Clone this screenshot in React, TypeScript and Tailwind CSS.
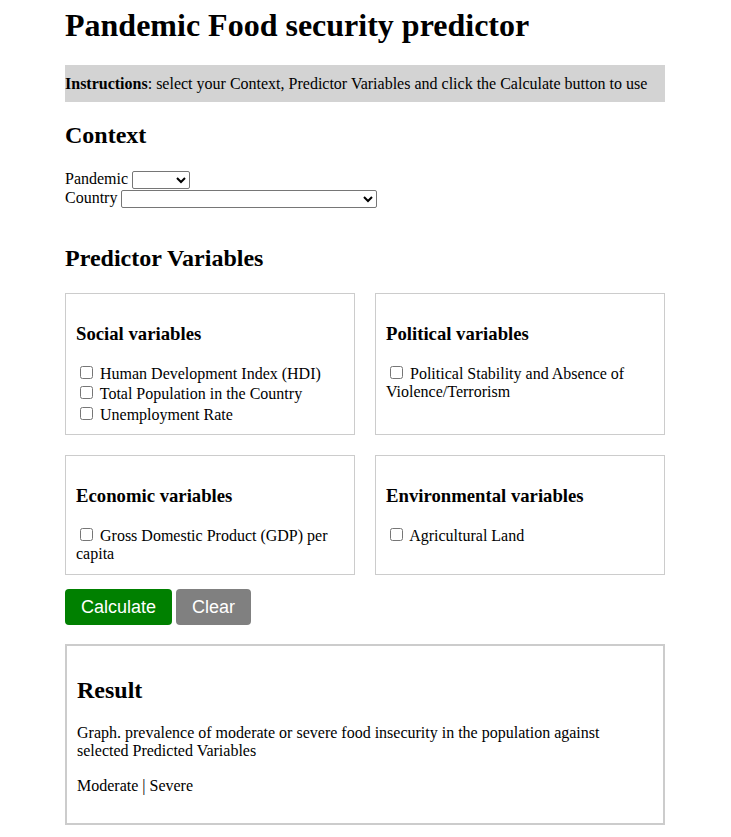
import React from "react";

function Check({ label }: { label: string }) {
  return (
    <>
      <input type="checkbox" className="ml-[4px] mr-[3px] my-[3px]" />
      <label> {label}</label>
      <br />
    </>
  );
}

function Card({ title, items }: { title: string; items: string[] }) {
  return (
    <div className="border border-[#cccccc] p-[10px]">
      <h3 className="text-[18.72px] font-bold my-[18.72px] leading-[1.15]">{title}</h3>
      {items.map((i) => (
        <Check key={i} label={i} />
      ))}
    </div>
  );
}

export default function App() {
  return (
    <div className="bg-white min-h-[837px] text-black text-[16px] leading-[1.15]" style={{ fontFamily: '"Liberation Serif", "Times New Roman", serif' }}>
      <div className="w-[600px] ml-[65px] pt-[7px] pb-[10px]">
        <h1 className="text-[32px] font-bold leading-[1.15] mb-[21.44px]">Pandemic Food security predictor</h1>
        <div className="bg-[#d3d3d3] py-[9px] leading-[19px]">
          <b>Instructions</b>: select your Context, Predictor Variables and click the Calculate button to use
        </div>
        <h2 className="text-[24px] font-bold leading-[1.15] my-[19.92px]">Context</h2>
        <div>
          <label>Pandemic </label>
          <select className="w-[58px] h-[18px] border border-[#767676] rounded-[2px] bg-white text-[13px] align-middle" style={{ fontFamily: "Arial, sans-serif" }}>
            <option></option>
          </select>
          <br />
          <label>Country </label>
          <select className="w-[256px] h-[18px] border border-[#767676] rounded-[2px] bg-white text-[13px] align-middle" style={{ fontFamily: "Arial, sans-serif" }}>
            <option></option>
          </select>
        </div>
        <h2 className="text-[24px] font-bold leading-[1.15] mt-[37px] mb-[19.92px]">Predictor Variables</h2>
        <div className="grid grid-cols-2 gap-[20px]">
          <Card title="Social variables" items={["Human Development Index (HDI)", "Total Population in the Country", "Unemployment Rate"]} />
          <Card title="Political variables" items={["Political Stability and Absence of Violence/Terrorism"]} />
          <Card title="Economic variables" items={["Gross Domestic Product (GDP) per capita"]} />
          <Card title="Environmental variables" items={["Agricultural Land"]} />
        </div>
        <div className="mt-[14px] flex gap-[4px]" style={{ fontFamily: '"Liberation Sans", Arial, sans-serif' }}>
          <button className="bg-[#008000] text-white text-[18px] px-[16px] py-[8px] rounded-[4px] leading-[20px]">Calculate</button>
          <button className="bg-[#808080] text-white text-[18px] px-[16px] py-[8px] rounded-[4px] leading-[20px]">Clear</button>
        </div>
        <div className="mt-[19px] border-2 border-[#cccccc] px-[10px] pt-[11px] pb-[12px]">
          <h2 className="text-[24px] font-bold leading-[1.15] my-[19.92px]">Result</h2>
          <p className="mb-[16px]">Graph. prevalence of moderate or severe food insecurity in the population against selected Predicted Variables</p>
          <p className="mb-[16px]">Moderate | Severe</p>
        </div>
      </div>
    </div>
  );
}
